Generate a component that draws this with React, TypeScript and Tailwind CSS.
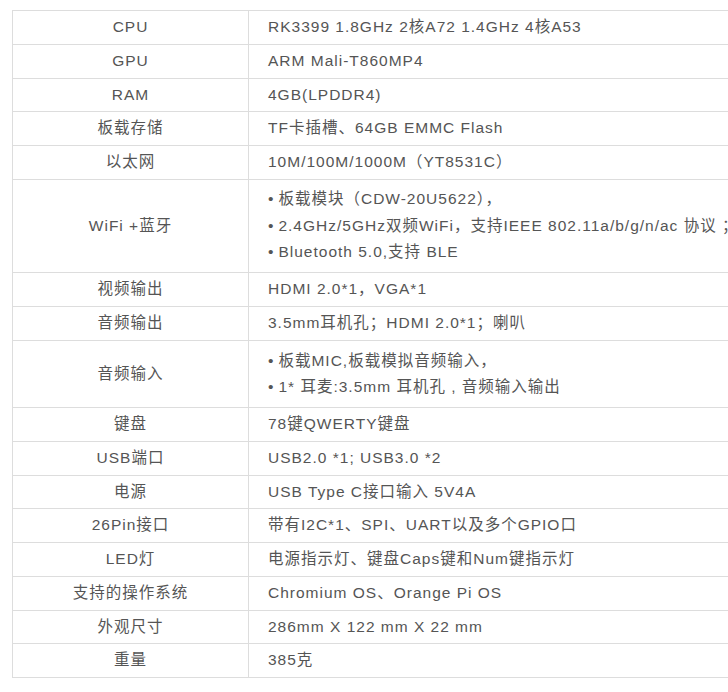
const rows: { label: string; value: string | string[] }[] = [
  { label: "CPU", value: "RK3399 1.8GHz 2核A72 1.4GHz 4核A53" },
  { label: "GPU", value: "ARM Mali-T860MP4" },
  { label: "RAM", value: "4GB(LPDDR4)" },
  { label: "板载存储", value: "TF卡插槽、64GB EMMC Flash" },
  { label: "以太网", value: "10M/100M/1000M（YT8531C）" },
  {
    label: "WiFi +蓝牙",
    value: [
      "板载模块（CDW-20U5622），",
      "2.4GHz/5GHz双频WiFi，支持IEEE 802.11a/b/g/n/ac 协议 ；",
      "Bluetooth 5.0,支持 BLE",
    ],
  },
  { label: "视频输出", value: "HDMI 2.0*1，VGA*1" },
  { label: "音频输出", value: "3.5mm耳机孔；HDMI 2.0*1；喇叭" },
  {
    label: "音频输入",
    value: ["板载MIC,板载模拟音频输入，", "1* 耳麦:3.5mm 耳机孔 , 音频输入输出"],
  },
  { label: "键盘", value: "78键QWERTY键盘" },
  { label: "USB端口", value: "USB2.0 *1; USB3.0 *2" },
  { label: "电源", value: "USB Type C接口输入 5V4A" },
  { label: "26Pin接口", value: "带有I2C*1、SPI、UART以及多个GPIO口" },
  { label: "LED灯", value: "电源指示灯、键盘Caps键和Num键指示灯" },
  { label: "支持的操作系统", value: "Chromium OS、Orange Pi OS" },
  { label: "外观尺寸", value: "286mm X 122 mm X 22 mm" },
  { label: "重量", value: "385克" },
];

export default function App() {
  return (
    <div className="h-[692px] w-[728px] overflow-hidden bg-white pt-[10px] pl-[12px]">
      <table
        className="w-[800px] border-collapse text-[15.5px] tracking-[1px] text-[#555]"
        style={{ fontFamily: '"Liberation Sans", "Noto Sans CJK SC", sans-serif' }}
      >
        <tbody>
          {rows.map((row) => (
            <tr key={row.label}>
              <td className="w-[236px] border border-[#ddd] px-2 py-[4px] text-center leading-[24.75px]">
                {row.label}
              </td>
              <td className="whitespace-nowrap border border-[#ddd] py-[4px] pl-[19px] pr-2 leading-[24.75px]">
                {Array.isArray(row.value) ? (
                  <ul className="py-[2.6px]">
                    {row.value.map((item) => (
                      <li key={item} className="leading-[26.5px]">
                        <span className="mr-[4px]">•</span>
                        {item}
                      </li>
                    ))}
                  </ul>
                ) : (
                  row.value
                )}
              </td>
            </tr>
          ))}
        </tbody>
      </table>
    </div>
  );
}
